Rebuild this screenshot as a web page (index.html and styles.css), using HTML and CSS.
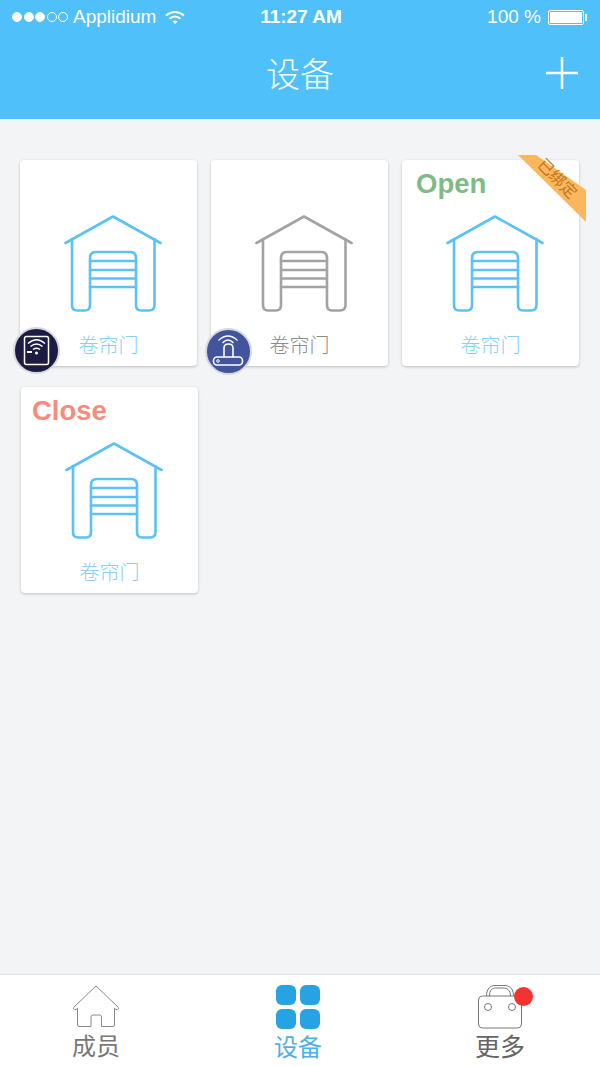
FILE: index.html
```html
<!DOCTYPE html>
<html lang="zh-CN">
<head>
    <meta charset="UTF-8">
    <meta name="viewport" content="width=device-width, initial-scale=1.0">
    <title>设备</title>
    <link rel="stylesheet" href="styles.css">
</head>
<body>
    <svg class="defs" width="0" height="0">
        <symbol id="garage" viewBox="0 0 98 98">
            <g fill="none" stroke="currentColor" stroke-width="2.6" stroke-linecap="round" stroke-linejoin="round">
                <path d="M1.5 28 L49 1.5 L96.5 28"/>
                <path d="M8 24 V90 Q8 95.5 13 95.5 H21 Q26 95.5 26 90 V43 Q26 37 32 37 H66 Q72 37 72 43 V90 Q72 95.5 77 95.5 H85 Q90.5 95.5 90.5 90 V24"/>
                <path d="M26 46 H72 M26 55 H72 M26 63.5 H72 M26 72 H72"/>
            </g>
        </symbol>
    </svg>

    <div class="app">
        <header class="topbar">
            <div class="status">
                <div class="status-left">
                    <span class="signal"><i class="on"></i><i class="on"></i><i class="on"></i><i></i><i></i></span>
                    <span class="carrier">Applidium</span>
                    <svg class="wifi" width="20" height="15" viewBox="0 0 20 15">
                        <g fill="none" stroke="#fff" stroke-width="2">
                            <path d="M1 5.5 Q10 -1.5 19 5.5"/>
                            <path d="M4.5 8.8 Q10 4.2 15.5 8.8"/>
                        </g>
                        <path d="M7.5 11.5 Q10 9.5 12.5 11.5 L10 14 Z" fill="#fff"/>
                    </svg>
                </div>
                <div class="clock">11:27 AM</div>
                <div class="status-right">
                    <span>100 %</span>
                    <span class="battery"><i></i></span>
                </div>
            </div>
            <div class="navbar">
                <h1>设备</h1>
                <svg class="add" width="34" height="34" viewBox="0 0 34 34">
                    <path d="M17 1 V33 M1 17 H33" stroke="#fff" stroke-width="2.5"/>
                </svg>
            </div>
        </header>

        <main class="devices">
            <div class="card">
                <svg class="garage"><use href="#garage"/></svg>
                <div class="card-name">卷帘门</div>
                <div class="badge badge-dark">
                    <svg width="44" height="44" viewBox="0 0 44 44">
                        <rect x="9.5" y="7.5" width="24" height="28" rx="2" fill="none" stroke="#fff" stroke-width="1.5"/>
                        <g fill="none" stroke="#fff" stroke-width="1.5">
                            <path d="M13 14.5 Q21.5 7 30 14.5"/>
                            <path d="M15.5 17.5 Q21.5 12.5 27.5 17.5"/>
                            <path d="M18 20.5 Q21.5 18 25 20.5"/>
                        </g>
                        <rect x="12" y="22" width="5" height="2" fill="#fff"/>
                        <circle cx="21.5" cy="24" r="1.5" fill="#fff"/>
                    </svg>
                </div>
            </div>

            <div class="card card-off">
                <svg class="garage"><use href="#garage"/></svg>
                <div class="card-name">卷帘门</div>
                <div class="badge badge-blue">
                    <svg width="44" height="44" viewBox="0 0 44 44">
                        <g fill="none" stroke="#fff" stroke-width="1.6" stroke-linecap="round">
                            <path d="M12 10 Q21 2 30 10"/>
                            <path d="M16 12.5 Q21 7.5 26 12.5"/>
                            <path d="M17 27 V18 Q17 14 21.5 14 Q26 14 26 18 V27"/>
                            <rect x="6.5" y="27" width="29" height="8" rx="3.5"/>
                        </g>
                        <circle cx="11" cy="31" r="1.3" fill="none" stroke="#fff"/>
                    </svg>
                </div>
            </div>

            <div class="card">
                <div class="state state-open">Open</div>
                <svg class="garage"><use href="#garage"/></svg>
                <div class="card-name">卷帘门</div>
                <div class="ribbon">
                    <svg width="68" height="68" viewBox="0 0 68 68">
                        <path d="M0 0 H18 L68 35 V67 L61 60 Z" fill="#fbb65e"/>
                    </svg>
                    <span>已绑定</span>
                </div>
            </div>

            <div class="card card-shift">
                <div class="state state-close">Close</div>
                <svg class="garage"><use href="#garage"/></svg>
                <div class="card-name">卷帘门</div>
            </div>
        </main>

        <nav class="tabbar">
            <div class="tab">
                <svg width="50" height="44" viewBox="0 0 50 44">
                    <path d="M25 1 L47.5 22.5 Q48 24 46.5 24.5 Q45 25 43.5 23.5 V40 Q43.5 41.5 42 41.5 H30.5 V32 Q30.5 30 28.5 30 H22 Q20 30 20 32 V41.5 H8 Q6.5 41.5 6.5 40 V23.5 Q5 25 3.5 24.5 Q2 24 2.5 22.5 Z" fill="none" stroke="#8a8a8a" stroke-width="1"/>
                </svg>
                <span>成员</span>
            </div>
            <div class="tab tab-active">
                <div class="tab-grid"><i></i><i></i><i></i><i></i></div>
                <span>设备</span>
            </div>
            <div class="tab tab-more">
                <svg width="46" height="44" viewBox="0 0 46 44">
                    <g fill="none" stroke="#777" stroke-width="1">
                        <rect x="1.5" y="11" width="43" height="32" rx="4"/>
                        <path d="M9.5 11 C9.5 3 14 0.5 18 0.5 H27 C32 0.5 36.5 3 36.5 11"/>
                        <path d="M12.5 11 C12.5 5 15 3 19 3 H26 C30 3 33.5 5 33.5 11"/>
                        <circle cx="11" cy="22" r="3.5"/>
                        <circle cx="35" cy="22" r="3.5"/>
                    </g>
                </svg>
                <i class="dot"></i>
                <span>更多</span>
            </div>
        </nav>
    </div>
</body>
</html>
```

FILE: styles.css
```css
* {
    box-sizing: border-box;
}

body {
    margin: 0;
    font-family: "Liberation Sans", "Noto Sans CJK SC", sans-serif;
    background: #f2f4f6;
    color: #333;
}

.defs {
    display: block;
    height: 0;
}

.app {
    height: 1067px;
    display: flex;
    flex-direction: column;
    overflow: hidden;
}

/* top bar */
.topbar {
    height: 119px;
    background: #4fc0fa;
    color: #fff;
}

.status {
    height: 34px;
    padding: 0 16px 0 12px;
    display: flex;
    align-items: center;
    justify-content: space-between;
    font-size: 19px;
}

.status-left,
.status-right {
    width: 190px;
    display: flex;
    align-items: center;
}

.status-left {
    width: 196px;
}

.status-right {
    justify-content: flex-end;
    gap: 7px;
}

.signal {
    display: flex;
    gap: 1.5px;
    margin-right: 5px;
}

.signal i {
    width: 10px;
    height: 10px;
    border-radius: 50%;
    border: 1px solid #fff;
}

.signal i.on {
    background: #fff;
}

.wifi {
    margin-left: 9px;
}

.clock {
    font-weight: bold;
}

.battery {
    width: 36px;
    height: 15px;
    padding: 1px;
    border: 1px solid #fff;
    border-radius: 2px;
    position: relative;
}

.battery i {
    display: block;
    height: 100%;
    background: #fff;
}

.battery::after {
    content: "";
    position: absolute;
    right: -4px;
    top: 3px;
    width: 2px;
    height: 7px;
    background: #fff;
}

.navbar {
    height: 85px;
    padding: 0 21px 8px 0;
    display: flex;
    align-items: center;
    justify-content: flex-end;
    position: relative;
}

.navbar h1 {
    position: absolute;
    left: 0;
    right: 0;
    top: 17px;
    margin: 0;
    text-align: center;
    font-size: 34px;
    font-weight: 300;
    line-height: 48px;
}

/* devices */
.devices {
    flex: 1;
    padding: 41px 20px 0;
    display: grid;
    grid-template-columns: repeat(3, 177px);
    grid-auto-rows: 206px;
    column-gap: 14px;
    row-gap: 21px;
}

.card {
    position: relative;
    background: #fff;
    border-radius: 4px;
    box-shadow: 0 1px 3px rgba(0, 0, 0, 0.22);
    color: #5cc2f5;
    display: flex;
    flex-direction: column;
    align-items: center;
    padding-top: 55px;
}

.card-shift {
    margin-left: 1px;
    margin-right: -1px;
}

.card-off {
    color: #a3a3a3;
}

.garage {
    width: 98px;
    height: 98px;
    flex: none;
    margin-left: 9px;
}

.card-name {
    margin-top: 19px;
    font-size: 20px;
    line-height: 28px;
    font-weight: 300;
    color: #86cff5;
}

.card-off .card-name {
    color: #8c8c8c;
}

.state {
    position: absolute;
    left: 14px;
    top: 7px;
    font-size: 27.5px;
    line-height: 34px;
    font-weight: bold;
}

.state-open {
    color: #7fbb85;
}

.state-close {
    left: 11px;
    color: #f98b7c;
}

.badge {
    position: absolute;
    left: -7px;
    bottom: -8px;
    width: 47px;
    height: 47px;
    border-radius: 50%;
    border: 2px solid #d5d6de;
}

.badge svg {
    display: block;
}

.badge-dark {
    background: #1c1b44;
}

.badge-blue {
    left: -6px;
    bottom: -9px;
    background: #41549c;
}

.ribbon {
    position: absolute;
    left: 116px;
    top: -5px;
    width: 68px;
    height: 68px;
}

.ribbon svg {
    display: block;
}

.ribbon span {
    position: absolute;
    left: 14px;
    top: 15px;
    width: 50px;
    font-size: 16px;
    line-height: 18px;
    text-align: center;
    color: #c07a1c;
    transform: rotate(45deg);
    white-space: nowrap;
}

/* bottom tabs */
.tabbar {
    height: 93px;
    background: #fff;
    border-top: 1px solid #e2e3e6;
    display: grid;
    grid-template-columns: 192px 212px 192px;
    padding-top: 10px;
}

.tab {
    position: relative;
    display: flex;
    flex-direction: column;
    align-items: center;
    color: #777;
    font-size: 24px;
    line-height: 32px;
}

.tab span {
    margin-top: 2px;
}

.tab svg {
    display: block;
}

.tab-active {
    color: #4fb0e6;
}

.tab-active span {
    margin-top: 3px;
}

.tab-more {
    color: #666;
    font-size: 25px;
}

.tab-grid {
    width: 44px;
    height: 44px;
    display: grid;
    grid-template-columns: 1fr 1fr;
    gap: 4px;
}

.tab-grid i {
    background: #27a3e4;
    border-radius: 6px;
}

.dot {
    position: absolute;
    left: 110px;
    top: 2px;
    width: 19px;
    height: 19px;
    border-radius: 50%;
    background: #f53232;
}
```
